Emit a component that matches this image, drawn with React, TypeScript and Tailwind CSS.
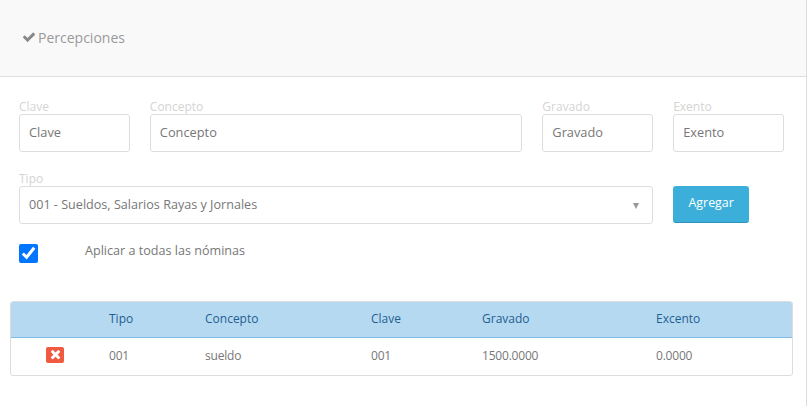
const inputClass =
  'block h-[38px] w-full rounded-[3px] border border-[#dddddd] bg-white px-[9px] text-[12.8px] outline-none placeholder:text-[#777777]';
const labelClass = 'block h-[15px] text-[12px] leading-[15px] text-[#d4d4d4]';

const fields = [
  { label: 'Clave', span: 'col-span-2' },
  { label: 'Concepto', span: 'col-span-6' },
  { label: 'Gravado', span: 'col-span-2' },
  { label: 'Exento', span: 'col-span-2' },
];

function CheckIcon() {
  return (
    <svg viewBox="0 0 1792 1792" className="mr-[2px] h-[14px] w-[14px] fill-[#888888]">
      <path d="M1671 566q0 40-28 68l-724 724-136 136q-28 28-68 28t-68-28l-136-136-362-362q-28-28-28-68t28-68l136-136q28-28 68-28t68 28l294 295 656-657q28-28 68-28t68 28l136 136q28 28 28 68z" />
    </svg>
  );
}

function TimesIcon() {
  return (
    <svg viewBox="0 0 1408 1792" className="h-[14px] w-[11px] fill-white">
      <path d="M1298 1214q0 40-28 68l-136 136q-28 28-68 28t-68-28l-294-294-294 294q-28 28-68 28t-68-28l-136-136q-28-28-28-68t28-68l294-294-294-294q-28-28-28-68t28-68l136-136q28-28 68-28t68 28l294 294 294-294q28-28 68-28t68 28l136 136q28 28 28 68t-28 68l-294 294 294 294q28 28 28 68z" />
    </svg>
  );
}

export default function App() {
  return (
    <div className="h-[406px] w-[807px] overflow-hidden border-r border-[#dddddd] bg-white font-['Open_Sans',sans-serif] text-[12px] text-[#777777]">
      <div className="flex h-[77px] items-center border-b border-[#dddddd] bg-[#f9f9f9] pb-[2px] pl-[22px] text-[14px] text-[#999999]">
        <CheckIcon />
        <span>Percepciones</span>
      </div>

      <div className="grid w-[784px] grid-cols-12 gap-x-5 pl-[19px] pt-[22px]">
        {fields.map((f) => (
          <div key={f.label} className={f.span}>
            <label className={labelClass}>{f.label}</label>
            <input className={`${inputClass} pb-[3px]`} placeholder={f.label} />
          </div>
        ))}

        <div className="col-span-10 mt-[19px]">
          <label className={labelClass}>Tipo</label>
          <div className="relative">
            <select className={`${inputClass} appearance-none pt-[1px] !text-[12.6px] text-[#777777]`} defaultValue="001">
              <option value="001">001 - Sueldos, Salarios Rayas y Jornales</option>
            </select>
            <span className="pointer-events-none absolute right-[14px] top-[17px] h-0 w-0 border-x-[3px] border-t-[6px] border-x-transparent border-t-[#999999]" />
          </div>
        </div>
        <div className="col-span-2 mt-[34px]">
          <button className="h-[37px] w-[76px] rounded-[3px] border-b border-[#2f93bd] bg-[#3bafda] pb-[1px] text-[12.4px] text-white">
            Agregar
          </button>
        </div>
      </div>

      <div className="mt-[20px] flex items-start pl-[19px]">
        <input type="checkbox" defaultChecked className="m-0 h-[19px] w-[19px] accent-[#0075ff]" />
        <span className="ml-[47px] mt-[-1px] text-[12.6px] leading-[15px]">Aplicar a todas las nóminas</span>
      </div>

      <div className="ml-[10px] mt-[38px] w-[783px] overflow-hidden rounded-[3px] border border-[#dddddd]">
        <table className="w-full table-fixed border-collapse text-left">
          <thead>
            <tr className="h-[35px] border-b border-[#7fbde8] bg-[#b6d9f2] text-[#1f5f8f]">
              <th className="w-[98px] font-normal" />
              <th className="w-[96px] font-normal">Tipo</th>
              <th className="w-[166px] font-normal">Concepto</th>
              <th className="w-[111px] font-normal">Clave</th>
              <th className="w-[174px] font-normal">Gravado</th>
              <th className="font-normal">Excento</th>
            </tr>
          </thead>
          <tbody>
            <tr className="h-[38px] tracking-[-0.2px]">
              <td>
                <span className="ml-[35px] flex h-4 w-[18px] -translate-y-[1px] items-center justify-center rounded-[2px] bg-[#ef5a40]">
                  <TimesIcon />
                </span>
              </td>
              <td>001</td>
              <td>sueldo</td>
              <td>001</td>
              <td>1500.0000</td>
              <td>0.0000</td>
            </tr>
          </tbody>
        </table>
      </div>
    </div>
  );
}
